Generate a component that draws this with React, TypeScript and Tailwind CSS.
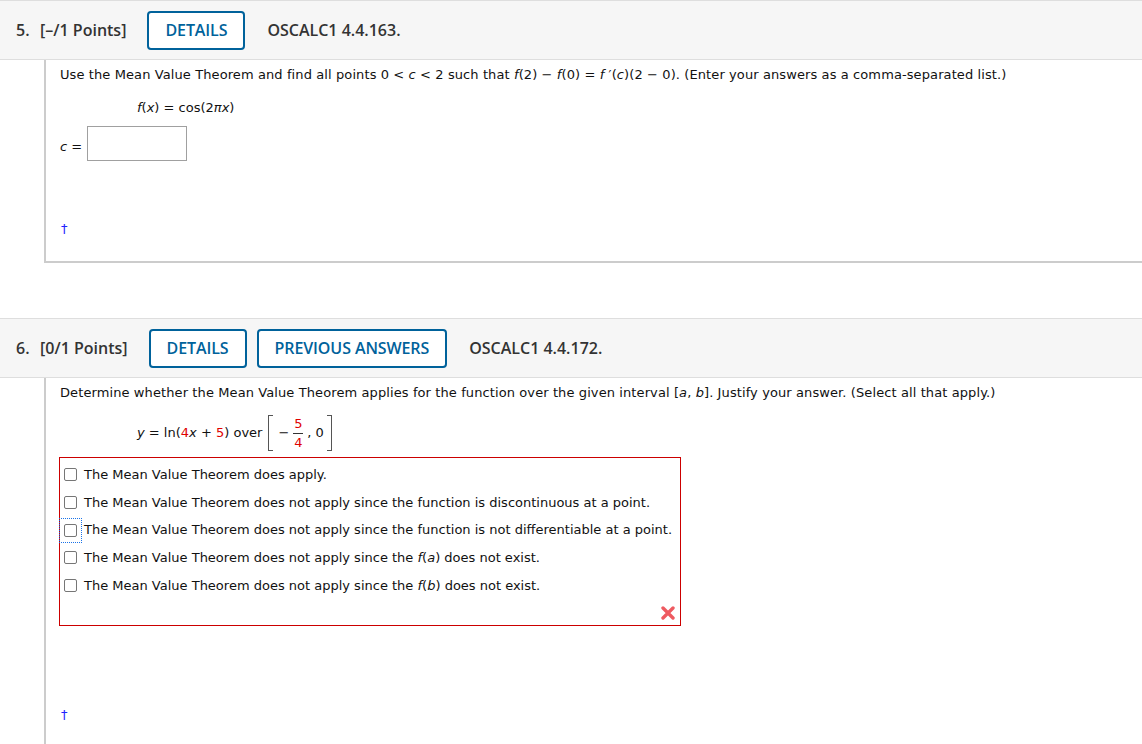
import React from "react";

const headFont = { fontFamily: '"Open Sans", "Noto Sans", sans-serif' };

function HeaderBtn({ label }: { label: string }) {
  return (
    <span className="inline-flex h-[39px] items-center justify-center rounded-[4px] border-2 border-[#00629b] bg-white px-[16px] text-[16px] font-semibold tracking-[-0.1px] text-[#00629b]">
      {label}
    </span>
  );
}

function QuestionHeader({ num, points, buttons, code }: { num: string; points: string; buttons: string[]; code: string }) {
  return (
    <div
      className="flex h-[60px] items-center border-y border-[#dedede] bg-[#f6f6f6] pl-[16px] text-[16px] font-semibold text-[#333333]"
      style={headFont}
    >
      <span className="w-[24px]">{num}</span>
      <span className="mr-[21px]">{points}</span>
      <div className="flex gap-[10px]">
        {buttons.map((b) => (
          <HeaderBtn key={b} label={b} />
        ))}
      </div>
      <span className="ml-[22px]">{code}</span>
    </div>
  );
}

function Dagger() {
  return <span className="text-[13px] leading-[20px] text-[#2222ff]">†</span>;
}

function Box() {
  return <span className="inline-block h-[13px] w-[13px] shrink-0 rounded-[2px] border border-[#767676] bg-white" />;
}

const OPTIONS: React.ReactNode[] = [
  "The Mean Value Theorem does apply.",
  "The Mean Value Theorem does not apply since the function is discontinuous at a point.",
  "The Mean Value Theorem does not apply since the function is not differentiable at a point.",
  <>
    The Mean Value Theorem does not apply since the <i>f</i>(<i>a</i>) does not exist.
  </>,
  <>
    The Mean Value Theorem does not apply since the <i>f</i>(<i>b</i>) does not exist.
  </>,
];

export default function App() {
  return (
    <div
      className="h-[744px] w-[1142px] overflow-hidden bg-white text-[13px] text-[#111111]"
      style={{ fontFamily: '"DejaVu Sans", Verdana, sans-serif' }}
    >
      {/* question 5 */}
      <QuestionHeader num="5." points="[–/1 Points]" buttons={["DETAILS"]} code="OSCALC1 4.4.163." />
      <div className="ml-[44px] flex h-[203px] flex-col border-b-2 border-l-2 border-[#cccccc] pl-[14px] pt-[5px] text-[13px] leading-[20px]">
        <p className="tracking-[0.1px]">
          Use the Mean Value Theorem and find all points 0 &lt; <i>c</i> &lt; 2 such that <i>f</i>(2) − <i>f</i>(0) ={" "}
          <i>f</i> ′(<i>c</i>)(2 − 0). (Enter your answers as a comma-separated list.)
        </p>
        <p className="ml-[77px] mt-[13px]">
          <i>f</i>(<i>x</i>) = cos(2<i>π</i>
          <i>x</i>)
        </p>
        <div className="mt-[8px] flex items-center gap-[5px]">
          <span className="pt-[6px]">
            <i>c</i> =
          </span>
          <span className="h-[35px] w-[100px] border border-[#a0a0a0] bg-white" />
        </div>
        <div className="ml-[1px] mt-[58px]">
          <Dagger />
        </div>
      </div>

      <div className="h-[55px]" />

      {/* question 6 */}
      <QuestionHeader
        num="6."
        points="[0/1 Points]"
        buttons={["DETAILS", "PREVIOUS ANSWERS"]}
        code="OSCALC1 4.4.172."
      />
      <div className="ml-[44px] flex h-[400px] flex-col border-l-2 border-[#cccccc] pl-[14px] pt-[5px] leading-[20px]">
        <p className="tracking-[0.1px]">
          Determine whether the Mean Value Theorem applies for the function over the given interval [<i>a</i>,{" "}
          <i>b</i>]. Justify your answer. (Select all that apply.)
        </p>
        <div className="ml-[77px] mt-[11px] flex h-[38px] items-center">
          <span>
            <i>y</i> = ln(<span className="text-[#e00000]">4</span>
            <i>x</i> + <span className="text-[#e00000]">5</span>) over
          </span>
          <span className="ml-[6px] flex h-[36px] items-stretch">
            <span className="w-[5px] border-y border-l border-[#555555]" />
            <span className="ml-[5px] self-center">−</span>
            <span className="mx-[4px] flex flex-col items-center justify-center text-[13px] leading-[16px] text-[#e00000]">
              <span>5</span>
              <span className="my-[1px] h-px w-[10px] bg-[#333333]" />
              <span>4</span>
            </span>
            <span className="self-center">, 0</span>
            <span className="ml-[3px] w-[5px] border-y border-r border-[#555555]" />
          </span>
        </div>
        <div className="ml-[-1px] mt-[5px] flex h-[169px] w-[622px] flex-col border border-[#cc0000] pl-[4px] pt-[3px]">
          {OPTIONS.map((o, i) => (
            <div key={i} className="flex h-[27.7px] items-center">
              <span
                className={
                  i === 2
                    ? "-ml-[5px] -my-[2px] flex items-center border border-dotted border-[#1a73e8] px-[4px] py-[5px]"
                    : "flex items-center"
                }
              >
                <Box />
              </span>
              <span className={i === 2 ? "ml-[2px]" : "ml-[7px]"}>{o}</span>
            </div>
          ))}
          <div className="mr-[5px] mt-[7px] flex justify-end">
            <svg width="14" height="14" viewBox="0 0 14 14">
              <path d="M2 2 L12 12 M12 2 L2 12" stroke="#ee5a60" strokeWidth="3.4" strokeLinecap="round" />
            </svg>
          </div>
        </div>
        <div className="ml-[1px] mt-[79px]">
          <Dagger />
        </div>
      </div>
    </div>
  );
}
